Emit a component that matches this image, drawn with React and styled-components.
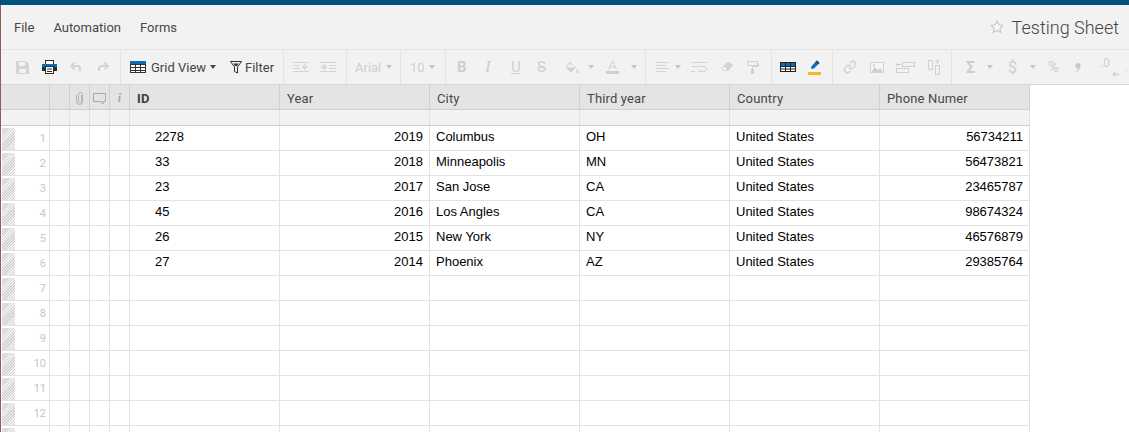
import styled, { createGlobalStyle } from 'styled-components';

const GlobalStyle = createGlobalStyle`
  html, body {
    margin: 0;
    padding: 0;
    height: 100%;
    overflow: hidden;
    background: #fff;
  }
`;

const TopStrip = styled.div`
  height: 5px;
  background: #00527a;
`;

const Page = styled.div`
  height: 427px;
  overflow: hidden;
  border-left: 1px solid #975a5a;
  font-family: Roboto, sans-serif;
`;

const MenuBar = styled.div`
  display: flex;
  align-items: center;
  justify-content: space-between;
  box-sizing: border-box;
  height: 45px;
  padding: 0 10px 0 13px;
  background: #f2f2f2;
  border-bottom: 1px solid #e4e4e4;
`;

const Menu = styled.div`
  display: flex;
  gap: 19px;
  font-size: 13px;
  color: #484848;
`;

const Title = styled.div`
  display: flex;
  align-items: center;
  gap: 8px;
  font-size: 18px;
  font-weight: 300;
  color: #444;
`;

const Toolbar = styled.div`
  display: flex;
  box-sizing: border-box;
  height: 35px;
  background: #f2f2f2;
  border-bottom: 1px solid #d6d6d6;
  overflow: hidden;
`;

const Group = styled.div`
  display: flex;
  align-items: center;
  flex: none;
  box-sizing: border-box;
  width: ${(p) => p.$w}px;
  padding-left: ${(p) => p.$pad}px;
  border-right: ${(p) => (p.$last ? 'none' : '1px solid #e4e4e4')};
`;

const Slot = styled.div`
  display: flex;
  align-items: center;
  flex: none;
  width: ${(p) => (p.$w ? `${p.$w}px` : 'auto')};
  font-size: 13px;
  color: ${(p) => (p.$on ? '#444' : '#cfcfcf')};
  white-space: nowrap;
`;

const Glyph = styled.span`
  font-family: ${(p) => (p.$serif ? '"Liberation Serif", serif' : 'Roboto, sans-serif')};
  font-size: ${(p) => p.$size || 15}px;
  font-weight: ${(p) => (p.$bold ? 700 : 400)};
  font-style: ${(p) => (p.$italic ? 'italic' : 'normal')};
  text-decoration: ${(p) => p.$line || 'none'};
`;

const Caret = styled.span`
  width: 0;
  height: 0;
  border-left: 3px solid transparent;
  border-right: 3px solid transparent;
  border-top: 4px solid ${(p) => (p.$on ? '#444' : '#c4c4c4')};
`;

const Row = styled.div`
  display: flex;
  box-sizing: border-box;
  width: 1029px;
  height: ${(p) => p.$h}px;
  background: ${(p) => p.$bg || '#fff'};
  border-bottom: 1px solid ${(p) => p.$line || '#e2e2e2'};
`;

const Cell = styled.div`
  display: flex;
  align-items: center;
  flex: none;
  box-sizing: border-box;
  width: ${(p) => p.$w}px;
  justify-content: ${(p) => (p.$right ? 'flex-end' : 'flex-start')};
  padding: 0 6px 4px ${(p) => p.$left ?? 6}px;
  border-right: 1px solid ${(p) => p.$line || '#e2e2e2'};
  font-family: "Liberation Sans", Arial, sans-serif;
  font-size: 13px;
  color: #000;
  white-space: nowrap;
`;

const HeadCell = styled(Cell)`
  justify-content: ${(p) => (p.$center ? 'center' : 'flex-start')};
  padding: ${(p) => (p.$center ? '3px 0 0' : '2px 0 0 7px')};
  font-family: Roboto, sans-serif;
  font-weight: ${(p) => (p.$bold ? 700 : 400)};
  letter-spacing: 0.15px;
  color: ${(p) => (p.$bold ? '#3f3f3f' : '#484848')};
`;

const Gutter = styled.div`
  display: flex;
  align-items: center;
  justify-content: space-between;
  flex: none;
  box-sizing: border-box;
  width: 49px;
  padding: 1px 3px 0 1px;
  border-right: 1px solid #e2e2e2;
`;

const Hatch = styled.div`
  width: 13px;
  height: 22px;
  background: repeating-linear-gradient(135deg, #d2d2d2 0 1px, #f3f3f3 1px 2px);
`;

const RowNum = styled.span`
  margin-bottom: 1px;
  font-size: 11px;
  color: #c9c4c0;
`;

const SaveIcon = () => (
  <svg width="13" height="14" viewBox="0 0 13 14" fill="#d4d4d4">
    <path fillRule="evenodd" d="M0 1h10l3 3v10H0zM3 2v4h6V2zM3 9v4h7V9z" />
  </svg>
);

const PrintIcon = () => (
  <svg width="15" height="14" viewBox="0 0 15 14">
    <rect x="3.500" y=".5" width="8" height="4" fill="#fff" stroke="#2c2c2c" />
    <rect x="0" y="4" width="15" height="3" fill="#0a6fb5" />
    <rect x="0" y="7" width="15" height="4" fill="#2c2c2c" />
    <rect x="3.500" y="6.500" width="8" height="7" fill="#fff" stroke="#2c2c2c" />
    <path d="M5 9h5M5 11.500h5" stroke="#2c2c2c" />
  </svg>
);

const UndoIcon = ({ flip }) => (
  <svg width="11" height="10" viewBox="0 0 11 10" fill="none" stroke="#d4d4d4" strokeWidth="2.200" style={flip ? { transform: 'scaleX(-1)' } : undefined}>
    <path d="M2 4h5a3 3 0 0 1 3 3v2" />
    <path d="M4.500.5 1 4l3.500 3.500" strokeWidth="1.800" />
  </svg>
);

const GridIcon = ({ color = '#0a6fb5' }) => (
  <svg width="16" height="12" viewBox="0 0 16 12" fill="none" stroke="#333">
    <rect x=".5" y=".5" width="15" height="11" fill="#fff" />
    <rect x="0" y="0" width="16" height="3" fill={color} stroke="none" />
    <path d="M0 3.500h16M0 6.500h16M0 9.500h16M5.500 3v9M10.500 3v9" />
  </svg>
);

const FunnelIcon = () => (
  <svg width="12" height="13" viewBox="0 0 12 13" fill="none" stroke="#333">
    <path d="M.5.500h11L7.500 6v6l-3-1.500V6z" />
    <path d="M3.500 2.500h5L7 5H5z" fill="#333" stroke="none" />
  </svg>
);

const OutdentIcon = ({ flip }) => (
  <svg width="16" height="11" viewBox="0 0 16 11" fill="none" stroke="#d4d4d4" style={flip ? { transform: 'scaleX(-1)' } : undefined}>
    <path d="M0 .500h16M0 3.500h7M0 6.500h7M0 9.500h16" />
    <path d="M15 5H10" strokeWidth="1.500" />
    <path d="M12.500 2.500 10 5l2.500 2.500" strokeWidth="1.500" />
  </svg>
);

const PaintIcon = () => (
  <svg width="14" height="13" viewBox="0 0 14 13" fill="none" stroke="#d0d0d0">
    <path d="M5 1 10.500 6.500 6 11 1 6.500z" />
    <path d="M5 1V4" />
    <path d="M1.500 6.500h8.500L6 10.500z" fill="#d0d0d0" stroke="none" />
    <path d="M12.500 8c.8 1.200 1.300 2 1.300 2.700a1.300 1.300 0 0 1-2.600 0c0-.7.500-1.500 1.300-2.700z" fill="#d0d0d0" stroke="none" />
  </svg>
);

const FontColor = () => (
  <svg width="13" height="14" viewBox="0 0 13 14" fill="none">
    <path d="M2.500 9.500 6.500.8l4 8.700M4 7h5" stroke="#d0d0d0" />
    <rect x="0" y="11" width="13" height="3" fill="#cfcfcf" />
  </svg>
);

const AlignIcon = () => (
  <svg width="13" height="11" viewBox="0 0 13 11" fill="none" stroke="#d4d4d4">
    <path d="M0 .500h13M0 3.500h10M0 6.500h13M0 9.500h10" />
  </svg>
);

const WrapIcon = () => (
  <svg width="16" height="11" viewBox="0 0 16 11" fill="none" stroke="#d4d4d4">
    <path d="M0 .500h16M0 4.500h13a2.500 2.500 0 0 1 0 5H8M0 9.500h4" />
    <path d="M10 7.500 8 9.500l2 2" />
  </svg>
);

const EraserIcon = () => (
  <svg width="14" height="12" viewBox="0 0 14 12">
    <path d="M8 .5 13.500 4 8 10H3.500L1 7.500z" fill="#d4d4d4" />
    <path d="M4 5 8 9.500H4L1.500 7.500z" fill="#f7f7f7" stroke="#d4d4d4" />
    <path d="M10 11h.8M12 11h.8" stroke="#d4d4d4" />
  </svg>
);

const RollerIcon = () => (
  <svg width="12" height="13" viewBox="0 0 12 13" fill="none" stroke="#d0d0d0">
    <rect x=".5" y=".5" width="10" height="4" />
    <path d="M10.500 2.500h1v3H5.500V8" />
    <rect x="4" y="8" width="3" height="5" fill="#d0d0d0" stroke="none" />
  </svg>
);

const BordersIcon = () => (
  <svg width="16" height="10" viewBox="0 0 16 10" fill="#fff" stroke="#222">
    <rect x=".5" y=".5" width="15" height="9" />
    <rect x="1" y="1" width="14" height="3" fill="#0a6fb5" stroke="none" />
    <path d="M0 4.500h16M0 7h16M5.500 0v10M10.500 0v10" />
  </svg>
);

const MarkerIcon = () => (
  <svg width="13" height="15" viewBox="0 0 13 15">
    <path d="M8.500.5 11.500 3 6 8.500 3.500 9 3 7z" fill="#0a6fb5" />
    <path d="M9 .5 11.500 3l-1 1L8 1.500z" fill="#333" />
    <rect x="0" y="12" width="13" height="3" fill="#f5bb1c" />
  </svg>
);

const LinkIcon = () => (
  <svg width="14" height="14" viewBox="0 0 24 24" fill="none" stroke="#d0d0d0" strokeWidth="2.400">
    <path d="M10 13a5 5 0 0 0 7.500.5l3-3a5 5 0 0 0-7-7l-1.700 1.700" />
    <path d="M14 11a5 5 0 0 0-7.500-.5l-3 3a5 5 0 0 0 7 7l1.700-1.700" />
  </svg>
);

const ImageIcon = () => (
  <svg width="14" height="11" viewBox="0 0 14 11">
    <rect x=".5" y=".5" width="13" height="10" fill="#f7f7f7" stroke="#d4d4d4" />
    <path d="M1 10 5 5l3 3 2-2 3 4z" fill="#d0d0d0" />
    <circle cx="4" cy="3.500" r="1.200" fill="#d0d0d0" />
  </svg>
);

const InsertRowIcon = () => (
  <svg width="19" height="11" viewBox="0 0 19 11" fill="none" stroke="#d0d0d0">
    <rect x="6.500" y=".5" width="12" height="4" />
    <rect x=".5" y="6.500" width="12" height="4" />
    <path d="M0 2.500h5M2 .5 0 2.500l2 2" />
  </svg>
);

const InsertColIcon = () => (
  <svg width="12" height="15" viewBox="0 0 12 15" fill="none" stroke="#d0d0d0">
    <rect x=".5" y=".5" width="4" height="9" />
    <rect x="7.500" y="5.500" width="4" height="9" />
    <path d="M9.500 0v4M7.500 2l2-2 2 2" />
  </svg>
);

const CommaIcon = () => (
  <svg width="6" height="9" viewBox="0 0 6 9" fill="#c8c8c8">
    <path d="M3 0a2.600 2.600 0 0 1 2.600 2.600C5.600 5 4 7.500 1.500 9L1 8.300C2.300 7.200 3 6.200 3.100 5.200A2.600 2.600 0 0 1 3 0z" />
  </svg>
);

const Decimal = () => (
  <svg width="13" height="7" viewBox="0 0 13 7" fill="none" stroke="#d0d0d0">
    <path d="M13 5.500H7M9 3.500l-2 2 2 2" strokeWidth="1.300" />
  </svg>
);

const DecimalWrap = styled.span`
  display: flex;
  align-items: flex-start;
  font-size: 12px;
  color: #cfcfcf;
`;

const DecimalArrow = styled.span`
  margin: 9px 0 0 -4px;
`;

const StarIcon = () => (
  <svg width="14" height="14" viewBox="0 0 24 24" fill="#f8f8f8" stroke="#c8c8c8" strokeWidth="2">
    <path d="m12 2 3.100 6.300 6.900 1-5 4.900 1.200 6.900-6.200-3.300-6.200 3.300 1.200-6.900-5-4.900 6.900-1z" />
  </svg>
);

const ClipIcon = () => (
  <svg width="8" height="13" viewBox="0 0 8 13" fill="none" stroke="#b4b4b4">
    <path d="M5.500 3v6.500a1.500 1.500 0 0 1-3 0V2.500a2 2 0 0 1 4 0v7a3 3 0 0 1-6 0V3" />
  </svg>
);

const CommentIcon = () => (
  <svg width="13" height="12" viewBox="0 0 13 12" fill="none" stroke="#a8a8a8">
    <path d="M.5.500h12v8H10V11L8 8.500H.5z" />
  </svg>
);

const InfoMark = styled.span`
  font-family: "Liberation Serif", serif;
  font-style: italic;
  font-weight: 700;
  font-size: 12px;
  color: #a8a8a8;
`;

const columns = ['ID', 'Year', 'City', 'Third year', 'Country', 'Phone Numer'];

const records = [
  ['2278', '2019', 'Columbus', 'OH', 'United States', '56734211'],
  ['33', '2018', 'Minneapolis', 'MN', 'United States', '56473821'],
  ['23', '2017', 'San Jose', 'CA', 'United States', '23465787'],
  ['45', '2016', 'Los Angles', 'CA', 'United States', '98674324'],
  ['26', '2015', 'New York', 'NY', 'United States', '46576879'],
  ['27', '2014', 'Phoenix', 'AZ', 'United States', '29385764'],
];

const rows = Array.from({ length: 13 }, (_, i) => records[i] || ['', '', '', '', '', '']);

function Tools() {
  return (
    <Toolbar>
      <Group $w={120} $pad={15}>
        <Slot $w={26}><SaveIcon /></Slot>
        <Slot $w={28}><PrintIcon /></Slot>
        <Slot $w={28}><UndoIcon /></Slot>
        <Slot><UndoIcon flip /></Slot>
      </Group>
      <Group $w={163} $pad={9}>
        <Slot $w={21}><GridIcon /></Slot>
        <Slot $w={59} $on>Grid View</Slot>
        <Slot $w={20}><Caret $on /></Slot>
        <Slot $w={15}><FunnelIcon /></Slot>
        <Slot $on>Filter</Slot>
      </Group>
      <Group $w={63} $pad={9}>
        <Slot $w={27}><OutdentIcon /></Slot>
        <Slot><OutdentIcon flip /></Slot>
      </Group>
      <Group $w={54} $pad={8}>
        <Slot $w={31}>Arial</Slot>
        <Slot><Caret /></Slot>
      </Group>
      <Group $w={45} $pad={9}>
        <Slot $w={19}>10</Slot>
        <Slot><Caret /></Slot>
      </Group>
      <Group $w={200} $pad={11}>
        <Slot $w={28}><Glyph $bold>B</Glyph></Slot>
        <Slot $w={26}><Glyph $italic $serif $size={17}>I</Glyph></Slot>
        <Slot $w={26}><Glyph $line="underline">U</Glyph></Slot>
        <Slot $w={28}><Glyph $line="line-through">S</Glyph></Slot>
        <Slot $w={23}><PaintIcon /></Slot>
        <Slot $w={18}><Caret /></Slot>
        <Slot $w={25}><FontColor /></Slot>
        <Slot><Caret /></Slot>
      </Group>
      <Group $w={126} $pad={10}>
        <Slot $w={19}><AlignIcon /></Slot>
        <Slot $w={16}><Caret /></Slot>
        <Slot $w={29}><WrapIcon /></Slot>
        <Slot $w={27}><EraserIcon /></Slot>
        <Slot><RollerIcon /></Slot>
      </Group>
      <Group $w={61} $pad={8}>
        <Slot $w={28}><BordersIcon /></Slot>
        <Slot><MarkerIcon /></Slot>
      </Group>
      <Group $w={119} $pad={10}>
        <Slot $w={27}><LinkIcon /></Slot>
        <Slot $w={26}><ImageIcon /></Slot>
        <Slot $w={32}><InsertRowIcon /></Slot>
        <Slot><InsertColIcon /></Slot>
      </Group>
      <Group $w={177} $pad={14} $last>
        <Slot $w={21}><Glyph $size={16} $bold>Σ</Glyph></Slot>
        <Slot $w={21}><Caret /></Slot>
        <Slot $w={22}><Glyph $size={16}>$</Glyph></Slot>
        <Slot $w={18}><Caret /></Slot>
        <Slot $w={27}><Glyph $size={15}>%</Glyph></Slot>
        <Slot $w={25}><CommaIcon /></Slot>
        <Slot $w={25}>
          <DecimalWrap>.0<DecimalArrow><Decimal /></DecimalArrow></DecimalWrap>
        </Slot>
        <Slot><DecimalWrap>.</DecimalWrap></Slot>
      </Group>
    </Toolbar>
  );
}

function Grid() {
  return (
    <>
      <Row $h={25} $bg="#e4e4e4" $line="#d0d0d0">
        <HeadCell $w={49} $line="#d0d0d0" />
        <HeadCell $w={20} $line="#d0d0d0" />
        <HeadCell $w={20} $center $line="#d0d0d0"><ClipIcon /></HeadCell>
        <HeadCell $w={20} $center $line="#d0d0d0"><CommentIcon /></HeadCell>
        <HeadCell $w={20} $center $line="#d0d0d0"><InfoMark>i</InfoMark></HeadCell>
        {columns.map((name, i) => (
          <HeadCell key={name} $w={150} $bold={i === 0} $line="#d0d0d0">{name}</HeadCell>
        ))}
      </Row>
      <Row $h={16} $bg="#f2f2f2" $line="#cfcfcf">
        <Cell $w={49} />
        {[0, 1, 2, 3].map((i) => <Cell key={i} $w={20} />)}
        {columns.map((name) => <Cell key={name} $w={150} />)}
      </Row>
      {rows.map((rec, i) => (
        <Row key={i} $h={25}>
          <Gutter>
            <Hatch />
            {i < 12 && <RowNum>{i + 1}</RowNum>}
          </Gutter>
          {[0, 1, 2, 3].map((n) => <Cell key={n} $w={20} />)}
          <Cell $w={150} $left={25}>{rec[0]}</Cell>
          <Cell $w={150} $right>{rec[1]}</Cell>
          <Cell $w={150}>{rec[2]}</Cell>
          <Cell $w={150}>{rec[3]}</Cell>
          <Cell $w={150}>{rec[4]}</Cell>
          <Cell $w={150} $right>{rec[5]}</Cell>
        </Row>
      ))}
    </>
  );
}

export default function App() {
  return (
    <>
      <GlobalStyle />
      <TopStrip />
      <Page>
        <MenuBar>
          <Menu>
            <span>File</span>
            <span>Automation</span>
            <span>Forms</span>
          </Menu>
          <Title>
            <StarIcon />
            <span>Testing Sheet</span>
          </Title>
        </MenuBar>
        <Tools />
        <Grid />
      </Page>
    </>
  );
}
